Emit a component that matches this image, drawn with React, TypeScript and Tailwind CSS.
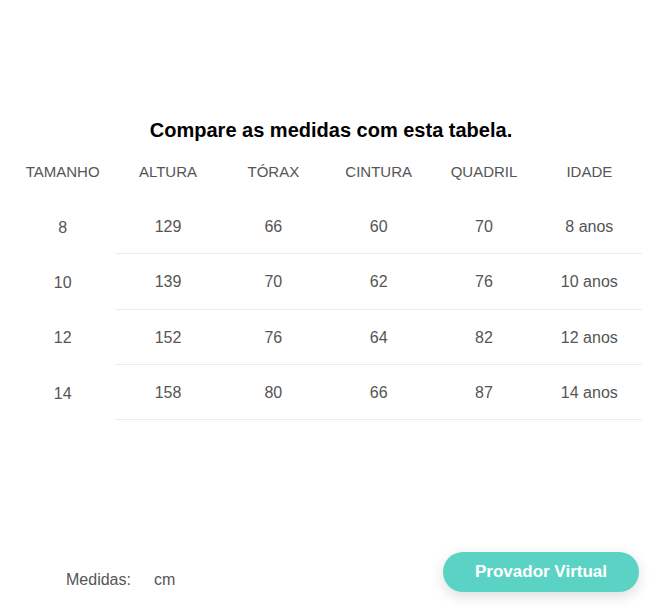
import React from "react";

const headers = ["TAMANHO", "ALTURA", "TÓRAX", "CINTURA", "QUADRIL", "IDADE"];
const rows = [
  ["8", "129", "66", "60", "70", "8 anos"],
  ["10", "139", "70", "62", "76", "10 anos"],
  ["12", "152", "76", "64", "82", "12 anos"],
  ["14", "158", "80", "66", "87", "14 anos"],
];

export default function App() {
  return (
    <div
      className="w-full h-[615px] bg-white flex flex-col text-[#555]"
      style={{ fontFamily: '"Liberation Sans", Arial, sans-serif' }}
    >
      <h1 className="pt-[119px] pr-[7px] text-center text-[20px] leading-[23px] font-bold text-black">
        Compare as medidas com esta tabela.
      </h1>
      <div className="ml-[10px] w-[632px] mt-[2px]">
        <div className="grid grid-cols-6 h-[55px] items-center">
          {headers.map((h) => (
            <div key={h} className="text-center text-[15px] leading-[17px] pb-[1px]">
              {h}
            </div>
          ))}
        </div>
        {rows.map((r, i) => (
          <div key={i} className="grid grid-cols-6 h-[55.33px]">
            {r.map((c, j) => (
              <div
                key={j}
                className={
                  "flex items-center justify-center pt-[2px] text-[16px] leading-[18px] " +
                  (j === 0 ? "" : "border-b border-[#ececec]")
                }
              >
                {c}
              </div>
            ))}
          </div>
        ))}
      </div>
      <div className="flex-1" />
      <div className="flex items-start justify-between pb-[23px]">
        <div className="flex mt-[19px] pl-[66px] text-[16px] leading-[18px]">
          <span>Medidas:</span>
          <span className="ml-[23px]">cm</span>
        </div>
        <button className="mr-[30px] w-[196px] h-[40px] rounded-full bg-[#5ad3c5] text-white font-bold text-[17px] shadow-[0_4px_14px_rgba(0,0,0,0.14)]">
          Provador Virtual
        </button>
      </div>
    </div>
  );
}
